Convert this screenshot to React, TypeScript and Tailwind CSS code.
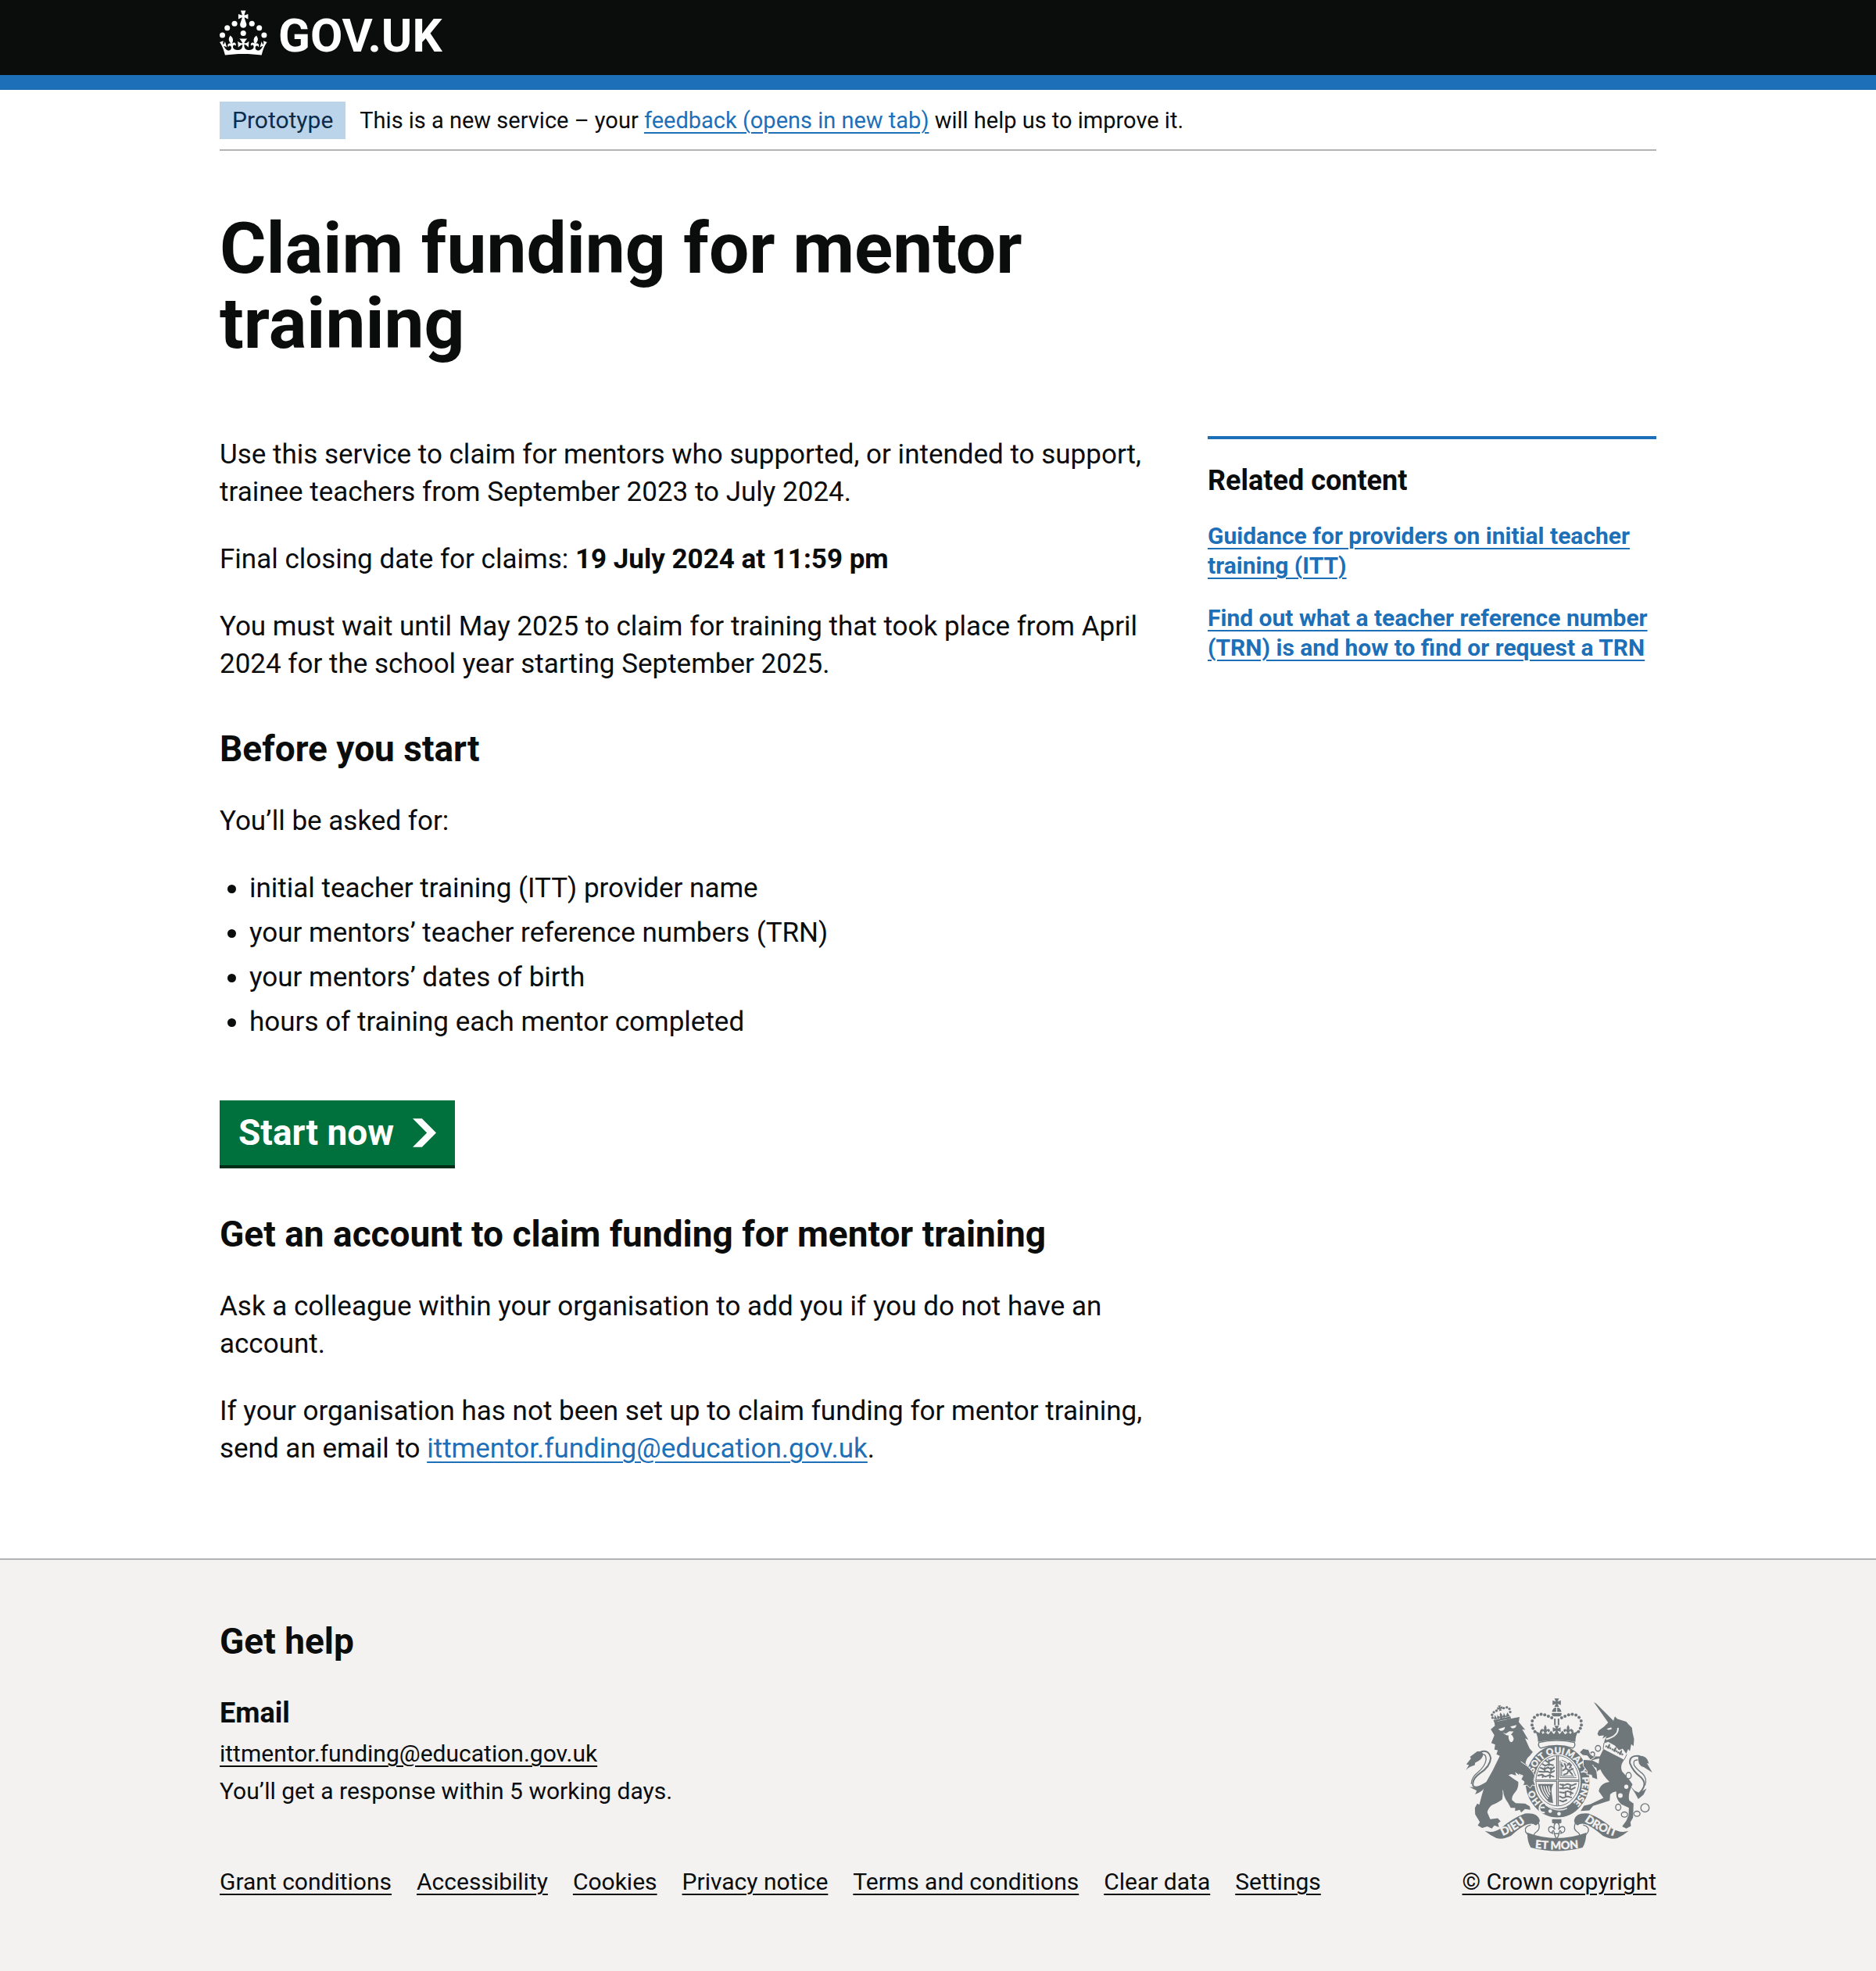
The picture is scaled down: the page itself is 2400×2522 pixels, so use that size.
import type { ReactNode } from "react";

const relatedLinks = [
  "Guidance for providers on initial teacher training (ITT)",
  "Find out what a teacher reference number (TRN) is and how to find or request a TRN",
];

const requirements = [
  "initial teacher training (ITT) provider name",
  "your mentors’ teacher reference numbers (TRN)",
  "your mentors’ dates of birth",
  "hours of training each mentor completed",
];

const footerLinks = [
  "Grant conditions",
  "Accessibility",
  "Cookies",
  "Privacy notice",
  "Terms and conditions",
  "Clear data",
  "Settings",
];

function CrownLogo() {
  return (
    <svg viewBox="0 0 64 60" className="h-[58px] w-[61px]" fill="currentColor" aria-hidden="true">
      <circle cx="20" cy="17.6" r="3.7" />
      <circle cx="10.2" cy="23.5" r="3.7" />
      <circle cx="3.7" cy="33.2" r="3.7" />
      <circle cx="31.7" cy="30.6" r="3.7" />
      <circle cx="43.3" cy="17.6" r="3.7" />
      <circle cx="53.2" cy="23.5" r="3.7" />
      <circle cx="59.7" cy="33.2" r="3.7" />
      <path d="M33.1,9.8c.2-.1.3-.3.5-.5l4.6,2.4v-6.8l-4.6,1.5c-.1-.2-.3-.3-.5-.5l1.9-5.9h-6.7l1.9,5.9c-.2.1-.3.3-.5.5l-4.6-1.5v6.8l4.6-2.4c.1.2.3.3.5.5l-2.6,8c-.9,2.8,1.2,5.7,4.1,5.7h0c3,0,5.1-2.9,4.1-5.7l-2.6-8ZM37,37.9s-3.4,3.8-4.1,6.1c2.2,0,4.2-.5,6.4-2.8l-.7,8.5c-2-2.8-4.4-4.1-5.7-3.8.1,3.1.5,6.7,5.8,7.2,3.7.3,6.7-1.5,7-3.8.4-2.6-2-4.3-3.7-1.6-1.4-4.5,2.4-6.1,4.9-3.2-1.9-4.5-1.8-7.7,2.4-10.9,3,4,2.6,7.3-1.2,11.1,2.4-1.3,6.2,0,4,4.6-1.2-2.8-3.7-2.2-4.2.2-.3,1.7.7,3.7,3,4.2,1.9.3,4.7-.9,7-5.9-1.3,0-2.4.7-3.9,1.7l2.4-8c.6,2.3,1.4,3.7,2.2,4.5.6-1.6.5-2.8,0-5.3l5,1.8c-2.6,3.6-5.2,8.7-7.3,17.5-7.4-1.1-15.7-1.7-24.5-1.7h0c-8.8,0-17.1.6-24.5,1.7-2.1-8.9-4.7-13.9-7.3-17.5l5-1.8c-.5,2.5-.6,3.7,0,5.3.8-.8,1.6-2.3,2.2-4.5l2.4,8c-1.5-1-2.6-1.7-3.9-1.7,2.3,5,5.2,6.2,7,5.9,2.3-.4,3.3-2.4,3-4.2-.5-2.4-3-3.1-4.2-.2-2.2-4.6,1.6-6,4-4.6-3.7-3.7-4.2-7.1-1.2-11.1,4.2,3.2,4.3,6.4,2.4,10.9,2.5-2.8,6.3-1.3,4.9,3.2-1.8-2.7-4.1-1-3.7,1.6.3,2.3,3.3,4.1,7,3.8,5.4-.5,5.7-4.2,5.8-7.2-1.3-.2-3.7,1-5.7,3.8l-.7-8.5c2.2,2.3,4.2,2.7,6.4,2.8-.7-2.3-4.1-6.1-4.1-6.1h10.6Z" />
    </svg>
  );
}

const crownPearls = [
  [338, 197], [331, 184], [327, 171], [328, 155], [336, 142], [348, 133], [362, 130], [376, 132], [390, 137], [403, 143],
];

const lionCrownPearls = [
  [173, 132], [180, 122], [190, 116], [218, 106], [230, 103], [240, 109], [243, 121], [175, 143],
];

const chainLinks = [
  [581, 261, 10, 11], [560, 284, 8, 9], [569, 343, 9, 11], [699, 366, 10, 12],
  [659, 488, 10, 12], [683, 516, 12, 10], [731, 513, 12, 10], [762, 490, 16, 16],
];

const garterWords: [string, number, number][] = [
  ["HO", 98, 35], ["SOIT", 230, 34], ["QUI", 309, 35], ["MAL", 384, 36], ["Y", 440, 28], ["PENSE", 514, 35],
];

/* Royal coat of arms: lion, crown and garter, unicorn, motto scroll. */
function RoyalArms() {
  const grey = "#6f777b";
  const paper = "#f3f2f1";
  return (
    <svg viewBox="72 68 718 590" className="h-[196px] w-[239px]" fill={grey} aria-hidden="true">
      <defs>
        <path id="garter" d="M425 494A96 106 0 0 1 425 282A96 106 0 0 1 425 494" />
        <path id="scroll-left" d="M205 602Q262 580 310 540" />
        <path id="scroll-mid" d="M335 645Q422 654 510 645" />
        <path id="scroll-right" d="M524 538Q580 580 652 603" />
        <path id="fleur" d="M0 -18Q8 -8 5 2Q14 -6 18 3Q18 11 10 11Q12 5 8 5L5 12H-5L-8 5Q-12 5 -10 11Q-18 11 -18 3Q-14 -6 -5 2Q-8 -8 0 -18Z" />
        <path id="cross" d="M-9 -16H9L3 -4L16 -9V9L3 4L9 16H-9L-3 4L-16 9V-9L-3 -4Z" />
      </defs>

      {/* motto scroll */}
      <path d="M145 579Q180 590 210 566Q255 528 300 512Q350 508 357 540Q354 552 342 558Q325 545 304 556Q278 568 246 598Q215 614 190 607Q165 595 145 579Z" />
      <path d="M699 579Q664 590 634 566Q589 528 544 512Q494 508 489 540Q490 552 502 558Q519 545 540 556Q566 568 600 598Q630 614 656 607Q680 595 699 579Z" />
      <path d="M309 586Q422 628 536 586Q536 620 522 643Q422 670 322 643Q308 620 309 586Z" />
      <g fill="none" stroke={grey} strokeWidth="4">
        <path d="M322 556Q296 562 302 582Q308 590 312 594M352 548Q360 572 345 582Q334 588 334 600" />
        <path d="M524 556Q550 562 543 582Q538 590 534 594M494 548Q484 572 500 582Q511 588 511 600" />
      </g>
      <g fill={paper} stroke={paper} strokeWidth="1" fontFamily="Lato, sans-serif" fontWeight="900" textAnchor="middle">
        <text fontSize="43"><textPath href="#scroll-left" startOffset="50%">DIEU</textPath></text>
        <text fontSize="43"><textPath href="#scroll-mid" startOffset="50%">ET MON</textPath></text>
        <text fontSize="43"><textPath href="#scroll-right" startOffset="50%">DROIT</textPath></text>
      </g>

      {/* lion */}
      <path d="M168 188L184 174L182 160L262 143L279 140L276 160L301 190L289 188L313 228L300 222L318 262L330 275L318 290Q304 300 302 320L322 340L337 362L332 385L340 403L327 402L320 413L308 403L292 404L297 390L285 380L291 366L275 362L262 352L266 366L248 360L236 364Q262 384 274 390Q276 415 262 430Q248 445 250 460L264 472L300 474L318 484L321 498L300 495L285 508L280 498L262 502L262 490L245 490L234 470Q218 450 216 425L213 420Q216 440 212 458Q190 474 172 480Q156 494 155 508L166 534L195 530L206 542L196 550L200 565L182 558L172 570L155 562L135 568L118 558L126 545L108 515L107 490L116 474L124 478Q136 430 148 395Q178 345 203 290L190 284L195 268L182 266L185 246L170 240L182 210Z" />
      <g fill={paper}>
        <path d="M197 187L223 179Q222 194 206 194Z" />
        <path d="M243 177L267 171Q264 186 250 184Z" />
        <path d="M214 200L226 204L240 195L256 196L246 208L252 214L238 212L228 210Z" />
        <path d="M236 212Q250 202 256 222Q256 236 246 237Q236 234 236 212Z" />
      </g>
      <path d="M72 345L84 325L74 322L92 300L88 294L116 273Q142 270 138 290Q130 308 108 316L106 326Q86 330 72 345Z" />
      <path d="M126 276Q160 262 168 298Q166 332 125 358Q94 380 100 406Q112 418 150 398" fill="none" stroke={grey} strokeWidth="6" />
      <path d="M130 285Q150 278 150 305Q146 330 118 354Q94 372 93 398" fill="none" stroke={grey} strokeWidth="4" />
      <path d="M86 410L108 412L130 402L156 388Q148 424 108 438L114 424Z" />
      <path d="M178 152L244 138L246 148Q212 150 182 162Z" />
      {lionCrownPearls.map(([x, y]) => (
        <circle key={`${x}-${y}`} cx={x} cy={y} r="5" />
      ))}
      <use href="#cross" transform="translate(203 106) scale(.65) rotate(-12)" />
      <use href="#fleur" transform="translate(208 137) scale(.8) rotate(-12)" />
      <path d="M180 150L184 132L192 146L194 130L200 146ZM216 142L218 124L226 138L232 122L242 138Z" />

      {/* unicorn */}
      <path d="M565 83L574 88L642 156L622 164Z" />
      <path d="M579 206L584 192L604 178L622 160L640 156L646 138L656 148L690 158L698 168L712 182L714 200L720 225L718 252L709 245L704 272L697 264L690 282L676 262L662 268L646 250L620 236L604 242L607 228L614 214L598 224L604 211L584 213Z" />
      <path d="M612 226Q660 214 658 182" fill="none" stroke={paper} strokeWidth="6" />
      <path d="M614 186L632 180L634 187L622 190Z" fill={paper} />
      <path d="M606 242L694 284L684 304L600 264Z" fill={paper} />
      <path d="M604 240L601 264M692 284L682 305" fill="none" stroke={grey} strokeWidth="3" />
      <use href="#fleur" transform="translate(622 254) scale(.7) rotate(24)" />
      <use href="#fleur" transform="translate(646 266) scale(.7) rotate(24)" />
      <use href="#fleur" transform="translate(668 278) scale(.7) rotate(24)" />
      <path d="M602 264L682 305Q664 328 674 350Q702 380 714 400Q694 440 702 462L718 474L716 528L706 545L708 560L690 570L674 562L690 540L699 518L700 490L670 476Q648 455 652 428Q640 425 628 438L626 462L562 483L548 500L514 502L527 482L552 476L602 452L584 426Q588 396 625 390Q600 365 590 342L572 352L560 340L532 312L528 316L556 346L568 352L580 382L558 372L556 364L538 362L540 350L522 326L524 304L556 306L584 320L586 300L552 308L540 290L522 288L510 276L524 262L545 266L550 282L566 292L588 292Z" />
      <g fill={paper}>
        <circle cx="690" cy="409" r="8" />
        <circle cx="667" cy="443" r="9" />
      </g>
      <g stroke={grey} strokeWidth="4" fill={paper}>
        {chainLinks.map(([x, y, rx, ry]) => (
          <ellipse key={`${x}-${y}`} cx={x} cy={y} rx={rx} ry={ry} />
        ))}
      </g>
      <path d="M736 290Q770 286 777 320L769 318L790 354L758 334Q732 328 736 290Z" />
      <path d="M742 291Q700 286 704 318Q716 350 746 372Q776 400 738 436" fill="none" stroke={grey} strokeWidth="6" />
      <path d="M734 306Q714 304 720 326Q730 342 752 358Q772 378 762 404" fill="none" stroke={grey} strokeWidth="4" />
      <path d="M704 404L722 424L740 432L768 416L756 440L736 456L724 434Z" />

      {/* crown */}
      <use href="#cross" transform="translate(422 85)" />
      <path d="M404 121Q406 104 420 103V121ZM424 103Q438 104 440 121H424ZM403 125H441Q442 138 430 138H414Q402 138 403 125Z" />
      <path d="M412 146H418V172H412ZM426 146H432V172H426Z" />
      {crownPearls.map(([x, y]) => (
        <g key={`${x}-${y}`}>
          <circle cx={x} cy={y} r="6" />
          <circle cx={844 - x} cy={y} r="6" />
        </g>
      ))}
      <use href="#cross" transform="translate(422 189) scale(.95)" />
      <use href="#fleur" transform="translate(378 188)" />
      <use href="#fleur" transform="translate(466 188)" />
      <path d="M339 194L356 202L359 190L368 206L378 199L390 207L400 193L410 206L422 200L434 206L444 193L454 207L466 199L476 206L485 190L488 202L505 194Q494 214 494 236Q422 222 350 236Q350 214 339 194Z" />

      {/* garter */}
      <ellipse cx="425" cy="388" rx="127" ry="144" fill={paper} />
      <ellipse cx="425" cy="388" rx="106" ry="122" fill="none" stroke={grey} strokeWidth="34" />
      <path d="M354 238Q422 224 490 238Q496 252 484 260Q422 240 360 260Q348 252 354 238Z" fill={paper} stroke={grey} strokeWidth="4" />
      <g fill={paper} stroke={paper} strokeWidth="1" fontFamily="Lato, sans-serif" fontWeight="900" textAnchor="middle">
        {garterWords.map(([word, at, size]) => (
          <text key={word} fontSize={size}>
            <textPath href="#garter" startOffset={at}>{word}</textPath>
          </text>
        ))}
      </g>

      {/* quartered shield */}
      <ellipse cx="425" cy="386" rx="83" ry="97" fill={paper} stroke={grey} strokeWidth="3" />
      <path d="M420 290H430V482H420ZM341 381H508V390H341Z" />
      <path d="M425 291V481M342 386H507" stroke={paper} strokeWidth="2" />
      <g fill="none" stroke={grey} strokeWidth="6" strokeLinejoin="round" strokeLinecap="round">
        <path d="M378 308L388 314L398 308L412 302M368 322L378 328L392 322L408 326M360 336L374 342L388 334L402 342L412 334M354 350L370 352L386 350L398 356L412 348M350 366L364 362L378 370L394 364L410 370M392 306V326M376 336V350M400 336V350M368 362V372M396 362V374" />
        <path d="M436 400L448 404L464 398L480 404L496 398M434 414L448 416L462 412L478 420L492 412M434 430L450 432L464 426L484 434M434 446L446 452L462 446L478 450M434 462L446 466L460 460M446 400V416M474 402V418M456 428V444M476 428V440" />
        <path d="M452 320Q460 330 456 340L446 346M456 338L470 346L484 340M468 346L462 358L450 362M472 350L482 362M464 326L470 318L478 326L472 336M446 330L440 324" />
      </g>
      <path d="M435 308V374H498M441 314V368H490M441 306Q476 316 496 368" fill="none" stroke={grey} strokeWidth="3" />
      <path d="M350 398L410 398Q398 412 404 442L408 472L392 468Q360 440 350 398Z" />
      <path d="M362 404Q366 432 388 456M372 406Q376 430 392 448M382 406Q384 426 396 440M392 406Q392 420 397 430" stroke={paper} strokeWidth="4" fill="none" />

      {/* buckle */}
      <path d="M372 474Q424 514 490 484L486 508Q440 540 364 508Z" />
      <path d="M378 478Q422 510 462 492" fill="none" stroke={paper} strokeWidth="4" />
      <path d="M384 474Q362 466 356 486Q352 510 376 508M360 489H376" fill="none" stroke={paper} strokeWidth="6" />
      <circle cx="397" cy="503" r="7" fill={paper} />
      <circle cx="431" cy="513" r="7" fill={paper} />

      {/* plant badge below the garter */}
      <path d="M404 534H440V548Q422 556 404 548Z" />
      <g fill={paper} stroke={grey} strokeWidth="4">
        <path d="M422 544Q438 556 429 574Q440 556 452 566Q458 584 438 588Q442 580 434 578L430 590H414L410 578Q402 580 406 588Q386 584 392 566Q404 556 415 574Q406 556 422 544Z" />
        <path d="M413 590H431L426 604L422 608L418 604Z" />
      </g>

      {/* lion's forepaw and unicorn's hooves, laid over the garter */}
      <g stroke={paper} strokeWidth="3">
        <path d="M284 312Q316 330 330 352L338 366L333 385L341 405L328 402L320 414L308 403L292 404L297 390L285 380L292 366L276 360" />
        <path d="M570 294L552 306L540 290L522 288L510 276L524 262L545 266L552 284L566 292" />
        <path d="M556 306L524 304L524 328L540 350L538 362L556 364L558 374L580 382L576 348L560 324" />
      </g>
    </svg>
  );
}

function BlueLink({ children }: { children: ReactNode }) {
  return (
    <a href="#" className="text-[#1d70b8] underline decoration-2 underline-offset-[5px]">
      {children}
    </a>
  );
}

function DarkLink({ children }: { children: ReactNode }) {
  return (
    <a href="#" className="text-[#0b0c0c] underline decoration-2 underline-offset-[5px]">
      {children}
    </a>
  );
}

function Container({ children, className = "" }: { children: ReactNode; className?: string }) {
  return <div className={`mx-auto w-full max-w-[1838px] ${className}`}>{children}</div>;
}

export default function App() {
  return (
    <div className="flex min-h-screen flex-col bg-white font-['Roboto',sans-serif] text-[35px] leading-[48px] text-[#0b0c0c]">
      <header className="border-b-[19px] border-[#1d70b8] bg-[#0b0c0c] text-white">
        <Container className="h-24 pt-[13px]">
          <a href="#" aria-label="GOV.UK" className="inline-flex items-start gap-[14px]">
            <CrownLogo />
            <span className="text-[60px] leading-[66px] font-bold">GOV.UK</span>
          </a>
        </Container>
      </header>

      <Container>
        <div className="flex items-center gap-[18px] border-b-2 border-[#b1b4b6] pt-[15px] pb-[13px] text-[29px]">
          <strong className="bg-[#bbd4ea] px-4 text-[30px] font-normal text-[#0c2d4a]">Prototype</strong>
          <span>
            This is a new service – your <BlueLink>feedback (opens in new tab)</BlueLink> will help us to improve it.
          </span>
        </div>
      </Container>

      <Container className="grow pt-[77px] pb-[114px]">
        <main className="grid grid-cols-3 gap-x-[58px]">
          <h1 className="col-span-2 mb-24 text-[91px] leading-[96px] font-bold">Claim funding for mentor training</h1>

          <div className="col-span-2 col-start-1">
            <p className="mb-[38px]">
              Use this service to claim for mentors who supported, or intended to support, trainee teachers from
              September 2023 to July 2024.
            </p>
            <p className="mb-[38px]">
              Final closing date for claims: <strong className="font-bold">19 July 2024 at 11:59 pm</strong>
            </p>
            <p>
              You must wait until May 2025 to claim for training that took place from April 2024 for the school year
              starting September 2025.
            </p>

            <h2 className="mt-14 mb-10 text-[46px] leading-[57px] font-bold">Before you start</h2>
            <p className="mb-[38px]">You’ll be asked for:</p>
            <ul className="flex list-disc flex-col gap-[9px] pl-[38px]">
              {requirements.map((item) => (
                <li key={item}>{item}</li>
              ))}
            </ul>

            <button
              type="button"
              className="mt-[76px] flex items-center gap-6 bg-[#00703c] px-6 py-[13px] text-[46px] leading-[57px] font-bold text-white shadow-[0_4px_0_#002d18]"
            >
              Start now
              <svg viewBox="0 0 33 40" className="h-[37px] w-[30px]" fill="currentColor" aria-hidden="true">
                <path d="M0 0h13l20 20-20 20H0l20-20z" />
              </svg>
            </button>

            <h2 className="mt-[60px] mb-10 text-[46px] leading-[57px] font-bold">
              Get an account to claim funding for mentor training
            </h2>
            <p className="mb-[38px]">
              Ask a colleague within your organisation to add you if you do not have an account.
            </p>
            <p>
              If your organisation has not been set up to claim funding for mentor training, send an email to{" "}
              <BlueLink>ittmentor.funding@education.gov.uk</BlueLink>.
            </p>
          </div>

          <aside className="border-t-4 border-[#1d70b8] pt-[29px]">
            <h2 className="mb-7 text-[36px] font-bold">Related content</h2>
            <ul className="flex flex-col gap-[29px] text-[30px] leading-[38px] font-bold">
              {relatedLinks.map((text) => (
                <li key={text}>
                  <BlueLink>{text}</BlueLink>
                </li>
              ))}
            </ul>
          </aside>
        </main>
      </Container>

      <footer className="border-t-2 border-[#b1b4b6] bg-[#f3f2f1] pt-[76px] pb-[95px]">
        <Container className="flex items-end justify-between">
          <div>
            <h2 className="mb-[39px] text-[46px] leading-[57px] font-bold">Get help</h2>
            <h3 className="mb-1 text-[36px] font-bold">Email</h3>
            <ul className="mb-[73px] text-[30px]">
              <li>
                <DarkLink>ittmentor.funding@education.gov.uk</DarkLink>
              </li>
              <li>You’ll get a response within 5 working days.</li>
            </ul>
            <ul className="flex flex-wrap gap-x-8 text-[30px] leading-[38px]">
              {footerLinks.map((text) => (
                <li key={text}>
                  <DarkLink>{text}</DarkLink>
                </li>
              ))}
            </ul>
          </div>
          <div className="flex flex-col items-center gap-5 text-[30px] leading-[38px]">
            <RoyalArms />
            <DarkLink>© Crown copyright</DarkLink>
          </div>
        </Container>
      </footer>
    </div>
  );
}
